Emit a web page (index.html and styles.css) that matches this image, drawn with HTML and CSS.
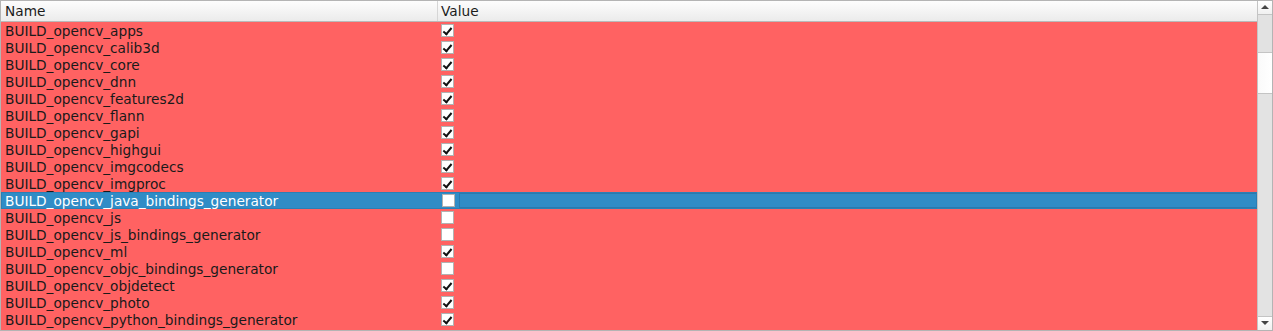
FILE: index.html
```html
<!DOCTYPE html>
<html lang="en">
<head>
    <meta charset="UTF-8">
    <meta name="viewport" content="width=device-width, initial-scale=1.0">
    <title>CMake cache</title>
    <link rel="stylesheet" href="styles.css">
</head>
<body>
    <div class="tree">
      <div class="view">
        <div class="header">
          <div class="hcell name-col">Name</div>
          <div class="hcell value-col">Value</div>
        </div>
        <div class="rows">
          <div class="row"><div class="name-col">BUILD_opencv_apps</div><div class="value-col"><span class="check on"></span></div></div>
          <div class="row"><div class="name-col">BUILD_opencv_calib3d</div><div class="value-col"><span class="check on"></span></div></div>
          <div class="row"><div class="name-col">BUILD_opencv_core</div><div class="value-col"><span class="check on"></span></div></div>
          <div class="row"><div class="name-col">BUILD_opencv_dnn</div><div class="value-col"><span class="check on"></span></div></div>
          <div class="row"><div class="name-col">BUILD_opencv_features2d</div><div class="value-col"><span class="check on"></span></div></div>
          <div class="row"><div class="name-col">BUILD_opencv_flann</div><div class="value-col"><span class="check on"></span></div></div>
          <div class="row"><div class="name-col">BUILD_opencv_gapi</div><div class="value-col"><span class="check on"></span></div></div>
          <div class="row"><div class="name-col">BUILD_opencv_highgui</div><div class="value-col"><span class="check on"></span></div></div>
          <div class="row"><div class="name-col">BUILD_opencv_imgcodecs</div><div class="value-col"><span class="check on"></span></div></div>
          <div class="row"><div class="name-col">BUILD_opencv_imgproc</div><div class="value-col"><span class="check on"></span></div></div>
          <div class="row selected"><div class="name-col">BUILD_opencv_java_bindings_generator</div><div class="value-col"><span class="check"></span><span class="editor"></span></div></div>
          <div class="row"><div class="name-col">BUILD_opencv_js</div><div class="value-col"><span class="check"></span></div></div>
          <div class="row"><div class="name-col">BUILD_opencv_js_bindings_generator</div><div class="value-col"><span class="check"></span></div></div>
          <div class="row"><div class="name-col">BUILD_opencv_ml</div><div class="value-col"><span class="check on"></span></div></div>
          <div class="row"><div class="name-col">BUILD_opencv_objc_bindings_generator</div><div class="value-col"><span class="check"></span></div></div>
          <div class="row"><div class="name-col">BUILD_opencv_objdetect</div><div class="value-col"><span class="check on"></span></div></div>
          <div class="row"><div class="name-col">BUILD_opencv_photo</div><div class="value-col"><span class="check on"></span></div></div>
          <div class="row"><div class="name-col">BUILD_opencv_python_bindings_generator</div><div class="value-col"><span class="check on"></span></div></div>
          <div class="row tail"></div>
        </div>
      </div>
      <!-- vertical scrollbar -->
      <div class="scrollbar">
        <div class="arrow up"></div>
        <div class="track">
          <div class="track-top"></div>
          <div class="handle"></div>
          <div class="track-rest"></div>
        </div>
        <div class="arrow down"></div>
      </div>
    </div>
</body>
</html>
```

FILE: styles.css
```css
body{
  margin: 0;
  background-color: #efefef;
  font-family: "DejaVu Sans", sans-serif;
  font-size: 13.7px;
}

.tree{  /* frame round the whole list */
  display: flex;
  width: 1273px;
  height: 331px;
  box-sizing: border-box;
  border: 1px solid #b4b4b4;
  background-color: white;
  overflow: hidden;
}

.view{
  flex: 1;
  display: flex;
  flex-direction: column;
  overflow: hidden;
}

.header{
  display: flex;
  height: 20px;
  flex-shrink: 0;
  background: linear-gradient(#fdfdfd, #ebebeb);
  border-bottom: 1px solid #b9b9b9;
  color: #1a1a1a;
}

.hcell{
  line-height: 21px;
  box-sizing: border-box;
}

.name-col{
  width: 437px;
  flex-shrink: 0;
  padding-left: 4px;
  box-sizing: border-box;
  white-space: nowrap;
}

.header .name-col{
  border-right: 1px solid #d6d6d6;
}

.value-col{
  flex: 1;
  display: flex;
  align-items: center;
  padding-left: 3px;
  gap: 4px;
}

.row{
  display: flex;
  height: 17px;
  line-height: 18px;
  background-color: #ff6262;
  color: #1a1a1a;
  box-sizing: border-box;
}

.row.selected{
  background-color: #308cc6;
  border: 1px solid #2b7fb5;
  color: white;
  line-height: 16px;
}

.row.selected .name-col{
  padding-left: 3px;
}

.check{  /* checkbox of the value column */
  width: 13px;
  height: 13px;
  box-sizing: border-box;
  border: 1px solid #b2b2b2;
  background-color: white;
  flex-shrink: 0;
  position: relative;
}

.check.on::after{
  content: "";
  position: absolute;
  left: 3px;
  top: 1px;
  width: 3px;
  height: 7px;
  border: solid #111;
  border-width: 0 2px 2px 0;
  transform: rotate(40deg);
}

.editor{
  flex: 1;
  height: 15px;
  border: 1px solid #2a79ad;
  border-right: none;
  box-sizing: border-box;
}

.scrollbar{
  width: 14px;
  flex-shrink: 0;
  display: flex;
  flex-direction: column;
  border-left: 1px solid #c4c4c4;
  background-color: #e3e3e3;
}

.arrow{
  height: 13px;
  flex-shrink: 0;
  background: linear-gradient(#ffffff, #f0f0f0);
  position: relative;
}

.arrow.up{
  border-bottom: 1px solid #c4c4c4;
}

.arrow.down{
  border-top: 1px solid #c4c4c4;
}

.arrow::after{
  content: "";
  position: absolute;
  left: 3px;
  top: 4px;
  border-left: 4px solid transparent;
  border-right: 4px solid transparent;
}

.arrow.up::after{
  border-bottom: 4px solid #444;
}

.arrow.down::after{
  border-top: 4px solid #444;
}

.track{
  flex: 1;
  display: flex;
  flex-direction: column;
}

.track-top{
  height: 37px;
  background-color: #e2e2e2;
  border-bottom: 1px solid #c4c4c4;
}

.handle{
  height: 40px;
  background: linear-gradient(90deg, #fafafa, #ffffff);
  border-bottom: 1px solid #c4c4c4;
}

.track-rest{
  flex: 1;
  background-color: #e3e3e3;
}
```
